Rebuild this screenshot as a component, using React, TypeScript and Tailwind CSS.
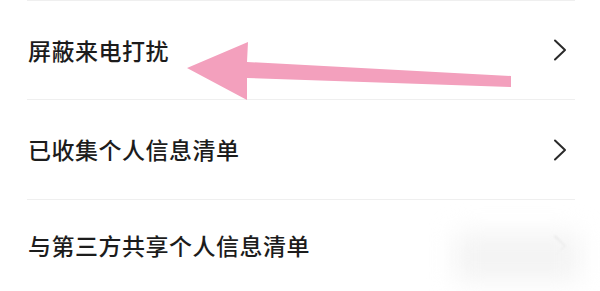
const rows = [
  { label: "屏蔽来电打扰", h: "h-[99px]", faded: false },
  { label: "已收集个人信息清单", h: "h-[100px]", faded: false },
  { label: "与第三方共享个人信息清单", h: "h-[92px]", faded: true },
];

function Chevron({ faded }: { faded: boolean }) {
  return (
    <svg
      width="14"
      height="22"
      viewBox="0 0 14 22"
      fill="none"
      className={faded ? "opacity-20 blur-[1px]" : ""}
    >
      <path d="M2 1.5 L12 11 L2 20.5" stroke="#2a2a2a" strokeWidth="2" strokeLinecap="round" strokeLinejoin="round" />
    </svg>
  );
}

export default function App() {
  return (
    <div
      className="relative h-[291px] w-[600px] overflow-hidden bg-white"
      style={{ fontFamily: '"Noto Sans CJK SC", "Noto Sans", sans-serif' }}
    >
      <div className="ml-[27px] w-[548px]">
        {rows.map((r) => (
          <div
            key={r.label}
            className={`flex items-center justify-between border-t border-[#efefef] pl-px pr-[8px] ${r.h}`}
          >
            <span className="text-[23px] font-medium leading-none tracking-[0.5px] text-[#1c1c1c]">
              {r.label}
            </span>
            <Chevron faded={r.faded} />
          </div>
        ))}
      </div>

      {/* blurred watermark patch */}
      <div className="absolute left-[455px] top-[232px] h-[50px] w-[125px] rounded-md bg-[#f4f4f4] blur-md" />

      {/* pink annotation arrow */}
      <svg className="pointer-events-none absolute left-0 top-0" width="600" height="291">
        <polygon
          points="187,68 248,42 247,62 511,76 511,87 247,78 247,100"
          fill="#f3a0bd"
        />
      </svg>
    </div>
  );
}
